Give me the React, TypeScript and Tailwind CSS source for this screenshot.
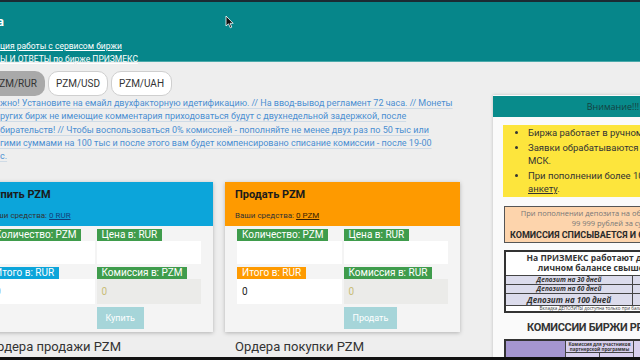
import { ReactNode } from "react";

function Label({ color, children }: { color: string; children: ReactNode }) {
  return (
    <div className="flex">
      <span className={`${color} text-white text-[10px] leading-[12px] h-[12px] px-[5px] whitespace-nowrap`}>{children}</span>
    </div>
  );
}

function TradeCard({
  title,
  funds,
  header,
  link,
  totalColor,
  commission,
  button,
}: {
  title: string;
  funds: string;
  header: string;
  link: string;
  totalColor: string;
  commission: string;
  button: string;
}) {
  return (
    <div className="w-[235px] shrink-0 bg-[#f4f4f4] shadow-[0_1px_4px_rgba(0,0,0,0.25)]">
      <div className={`${header} h-[44px] pl-[10px] pt-[7px]`}>
        <div className="text-[11px] font-bold text-[#1b1b1b] leading-[12px]">{title}</div>
        <div className="text-[8px] text-[#333] mt-[10px] leading-[10px] whitespace-nowrap">
          Ваши средства: <span className={`underline ${link}`}>{funds}</span>
        </div>
      </div>
      <div className="px-[12px] pt-[3px] pb-[3px] grid grid-cols-2 gap-x-[2px]">
        <div>
          <Label color="bg-[#3f9c4c]">Количество: PZM</Label>
          <div className="h-[23px] bg-white" />
        </div>
        <div>
          <Label color="bg-[#3f9c4c]">Цена в: RUR</Label>
          <div className="h-[23px] bg-white" />
        </div>
        <div className="mt-[3px]">
          <Label color={totalColor}>Итого в: RUR</Label>
          <div className="h-[25px] bg-white text-[10px] text-[#222] pl-[5px] flex items-center">0</div>
        </div>
        <div className="mt-[3px]">
          <Label color="bg-[#3f9c4c]">{commission}</Label>
          <div className="h-[25px] bg-[#ebebe9] text-[10px] text-[#c9bd78] pl-[5px] flex items-center">0</div>
        </div>
        <div />
        <div className="mt-[3px] flex">
          <div className="h-[22px] px-[9px] bg-[#a6d5d9] text-white text-[9px] flex items-center">{button}</div>
        </div>
      </div>
    </div>
  );
}

const notice = [
  "жно! Установите на емайл двухфакторную идетификацию. // На ввод-вывод регламент 72 часа. // Монеты",
  "ругих бирж не имеющие комментария приходоваться будут с двухнедельной задержкой, после",
  "бирательств! // Чтобы воспользоваться 0% комиссией - пополняйте не менее двух раз по 50 тыс или",
  "гими суммами на 100 тыс и после этого вам будет компенсировано списание комиссии - после 19-00",
  "с.",
];

export default function App() {
  return (
    <div className="relative w-[640px] h-[360px] overflow-hidden bg-[#eeeeee] font-['Roboto',sans-serif]">
      <div className="h-[2px] bg-[#1b2a33]" />
      <header className="relative h-[60px] bg-[#06868a] text-white border-b border-[#4aa9aa]">
        <div className="pt-[13px] text-[13px] font-bold leading-[14px] ml-[-3px]">а</div>
        <div className="mt-[11px] text-[8.5px] leading-[13px]">
          <div className="underline whitespace-nowrap">ция работы с сервисом биржи</div>
          <div className="underline whitespace-nowrap">Ы И ОТВЕТЫ по бирже ПРИЗМЕКС</div>
        </div>
        <svg className="absolute left-[225px] top-[13px]" width="9" height="14" viewBox="0 0 9 14">
          <path d="M1 1 L1 11 L3.5 8.8 L5.3 12.8 L6.8 12.1 L5.1 8.3 L8.2 8.3 Z" fill="#111" stroke="#fff" strokeWidth="0.8" />
        </svg>
      </header>

      <div className="flex">
        <div className="w-[482px] ml-[-22px] shrink-0">
          <div className="flex gap-[3px] mt-[9px] ml-[7px] text-[10px] text-[#333]">
            <div className="w-[60px] h-[25px] rounded-[10px] bg-[#a9a9a9] flex items-center justify-center">PZM/RUR</div>
            <div className="w-[60px] h-[25px] rounded-[10px] bg-white border border-[#cfcfcf] flex items-center justify-center">PZM/USD</div>
            <div className="w-[61px] h-[25px] rounded-[10px] bg-white border border-[#cfcfcf] flex items-center justify-center">PZM/UAH</div>
          </div>
          <div className="ml-[22px] mt-[1px] text-[9px] leading-[13.3px] text-[#4b8fd2]">
            {notice.map((l, i) => (
              <div key={i} className="whitespace-nowrap underline decoration-[#cfdbe6] underline-offset-[2px]">{l}</div>
            ))}
          </div>
          <div className="flex gap-[12px] mt-[19px]">
            <TradeCard
              title="Купить PZM"
              funds="0 RUR"
              header="bg-[#0ca5da]"
              link="text-[#123f7a]"
              totalColor="bg-[#0ca5da]"
              commission="Комиссия в: PZM"
              button="Купить"
            />
            <TradeCard
              title="Продать PZM"
              funds="0 PZM"
              header="bg-[#fe9a00]"
              link="text-[#3a2200]"
              totalColor="bg-[#fe9a00]"
              commission="Комиссия в: RUR"
              button="Продать"
            />
          </div>
          <div className="flex gap-[12px] mt-[5px] text-[13px] text-[#333]">
            <div className="w-[235px] pl-[10px]">Ордера продажи PZM</div>
            <div className="w-[235px] pl-[10px]">Ордера покупки PZM</div>
          </div>
        </div>

        <div className="ml-[33px] mt-[33px] w-[240px] shrink-0 bg-[#fafafa] shadow-[0_0_3px_rgba(0,0,0,0.2)] pt-[1px] font-['Open_Sans',sans-serif]">
          <div className="h-[21px] bg-[#088b8b] text-[#163f40] text-[9px] flex items-center justify-center">Внимание!!!</div>
          <div className="ml-[10px] mt-[8px] w-[220px] bg-[#fde53c] py-[1px] text-[9.5px] leading-[13.5px] text-[#333] font-['Roboto',sans-serif]">
            <ul className="list-disc pl-[25px] marker:text-[#333] space-y-[1px]">
              <li className="whitespace-nowrap">Биржа работает в ручном режиме</li>
              <li>Заявки обрабатываются с 10-00 до 19-00 МСК.</li>
              <li>При пополнении более 100 000 заполните <span className="underline">анкету</span>.</li>
            </ul>
          </div>
          <div className="ml-[11px] mt-[9px] w-[218px] bg-[#fdd4ac] border border-[#555] text-center pt-[1px]">
            <div className="text-[7.5px] leading-[10px] text-[#777] whitespace-nowrap">При пополнении депозита на общую сумму более</div>
            <div className="text-[7.5px] leading-[10px] text-[#777] whitespace-nowrap">99 999 рублей за сутки</div>
            <div className="text-[9px] leading-[14px] font-bold font-['Roboto',sans-serif] text-[#2a2a2a] whitespace-nowrap text-left pl-[5px]">КОМИССИЯ СПИСЫВАЕТСЯ И СРАЗУ</div>
          </div>
          <div className="ml-[11px] mt-[7px] w-[218px] border-2 border-[#333] bg-white text-[#333]">
            <div className="text-center text-[8.5px] font-bold leading-[10.5px] py-[1px]">
              <div className="whitespace-nowrap">На ПРИЗМЕКС работают депозиты при</div>
              <div className="whitespace-nowrap">личном балансе свыше 5 000 PZM</div>
            </div>
            <div className="grid grid-cols-[127px_1fr] text-[6.5px] italic font-bold text-[#333]">
              <div className="bg-[#dcdcec] border-t border-r border-[#444] h-[9px] leading-[8px] text-center">Депозит на 30 дней</div>
              <div className="bg-[#dcdcec] border-t border-[#444] h-[9px]" />
              <div className="bg-[#dcdcec] border-t border-r border-[#444] h-[9px] leading-[8px] text-center">Депозит на 60 дней</div>
              <div className="bg-[#dcdcec] border-t border-[#444] h-[9px]" />
              <div className="bg-[#dcdcec] border-t border-r border-[#444] h-[12px] leading-[11px] text-center text-[8px]">Депозит на 100 дней</div>
              <div className="bg-[#dcdcec] border-t border-[#444] h-[12px]" />
            </div>
            <div className="border-t border-[#444] text-[4.5px] leading-[5px] underline text-center whitespace-nowrap">Вкладка ДЕПОЗИТЫ доступна только при балансе более 5 000 PZM</div>
          </div>
          <div className="ml-[34px] mt-[8px] text-[11px] font-bold font-['Roboto',sans-serif] tracking-[-0.3px] text-[#333] whitespace-nowrap leading-[14px]">КОМИССИИ БИРЖИ PRIZMEX</div>
          <div className="ml-[11px] mt-[4px] w-[218px] border-2 border-[#333] grid grid-cols-[60px_68px_1fr] h-[30px]">
            <div className="bg-[#a596d0] border-r border-[#444]" />
            <div className="bg-[#d8d0ee] border-r border-[#444] text-[4.5px] font-bold text-[#333] text-center">
              <div className="leading-[5px] pt-[1px] h-[11px]">Комиссия для участников партнерской программы</div>
              <div className="grid grid-cols-2 border-t border-[#444] h-[10px] leading-[10px]">
                <div className="border-r border-[#444]">ввод</div>
                <div>вывод</div>
              </div>
            </div>
            <div className="bg-[#d8d0ee]" />
          </div>
        </div>
      </div>

      <div className="absolute left-0 bottom-0 w-full h-[3px] bg-[#111]" />
    </div>
  );
}
